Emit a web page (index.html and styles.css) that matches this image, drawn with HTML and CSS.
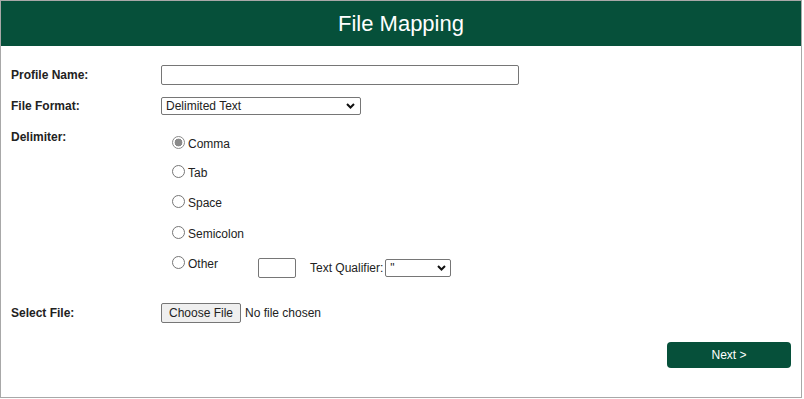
FILE: index.html
```html
<!DOCTYPE html>
<html>
<head>
<meta charset="utf-8">
<title>File Mapping</title>
<link rel="stylesheet" href="styles.css">
</head>
<body>
<div class="page">
  <header class="header"><h1 class="title">File Mapping</h1></header>
  <form class="form">
    <div class="row row-profile">
      <label class="label" for="pname">Profile Name:</label>
      <input class="text-input profile-input" id="pname" type="text">
    </div>
    <div class="row row-format">
      <label class="label" for="fmt">File Format:</label>
      <span class="select-wrap">
        <select class="select format-select" id="fmt">
          <option>Delimited Text</option>
          <option>Fixed Width</option>
        </select>
        <svg class="chev" width="9" height="6" viewBox="0 0 9 6"><path d="M1 1 L4.5 4.5 L8 1" fill="none" stroke="#111" stroke-width="2"/></svg>
      </span>
    </div>
    <div class="row row-delim">
      <div class="label label-top">Delimiter:</div>
      <div class="radio-list">
        <label class="radio-item item-comma"><input class="radio" type="radio" name="d" checked><span class="radio-text">Comma</span></label>
        <label class="radio-item item-tab"><input class="radio" type="radio" name="d"><span class="radio-text">Tab</span></label>
        <label class="radio-item item-space"><input class="radio" type="radio" name="d"><span class="radio-text">Space</span></label>
        <label class="radio-item item-semi"><input class="radio" type="radio" name="d"><span class="radio-text">Semicolon</span></label>
        <div class="radio-item other-item">
          <label class="other-label"><input class="radio" type="radio" name="d"><span class="radio-text">Other</span></label>
          <input class="text-input other-input" type="text">
          <span class="qual-text">Text Qualifier:</span>
          <span class="select-wrap qual-wrap">
            <select class="select qual-select">
              <option>"</option>
              <option>'</option>
            </select>
            <svg class="chev chev-q" width="9" height="6" viewBox="0 0 9 6"><path d="M1 1 L4.5 4.5 L8 1" fill="none" stroke="#111" stroke-width="2"/></svg>
          </span>
        </div>
      </div>
    </div>
    <div class="row row-file">
      <div class="label">Select File:</div>
      <div class="file-box">
        <button type="button" class="file-btn">Choose File</button>
        <span class="file-name">No file chosen</span>
      </div>
    </div>
    <div class="actions">
      <button type="button" class="next-btn">Next &gt;</button>
    </div>
  </form>
</div>
</body>
</html>
```

FILE: styles.css
```css
* { box-sizing: border-box; }
html, body { margin: 0; padding: 0; background: #fff; }
body { font-family: Arial, "Liberation Sans", sans-serif; color: #222; }

.page {
  width: 802px;
  height: 398px;
  border: 1px solid #a8a8a8;
  display: flex;
  flex-direction: column;
}

.header {
  height: 45px;
  background: #06503a;
  display: flex;
  align-items: center;
  justify-content: center;
}
.title {
  margin: 0;
  color: #fff;
  font-weight: normal;
  font-size: 22px;
  line-height: 26px;
}

.form {
  padding: 19px 10px 0 10px;
  display: flex;
  flex-direction: column;
}

.row {
  display: flex;
  align-items: center;
}
.label {
  width: 150px;
  flex: none;
  font-size: 12px;
  line-height: 14px;
  font-weight: bold;
  color: #222;
}

.text-input {
  border: 1px solid #767676;
  border-radius: 2px;
  background: #fff;
  padding: 0 3px;
  font: 12px Arial, "Liberation Sans", sans-serif;
  outline: none;
}
.profile-input { width: 358px; height: 20px; }

.row-format { margin-top: 12px; }

.select-wrap {
  position: relative;
  display: inline-flex;
}
.select {
  -webkit-appearance: none;
  appearance: none;
  height: 18px;
  border: 1px solid #767676;
  border-radius: 2px;
  background: #fff;
  font: 12px Arial, "Liberation Sans", sans-serif;
  color: #222;
  padding: 0 0 0 4px;
  line-height: 16px;
}
.chev {
  position: absolute;
  right: 6px;
  top: 6px;
  pointer-events: none;
}
.chev-q { right: 5px; }
.format-select { width: 200px; }

.row-delim {
  margin-top: 13px;
  align-items: flex-start;
}
.label-top { padding-top: 2px; }

.radio-list {
  display: flex;
  flex-direction: column;
  margin-left: 6px;
}
.radio-item {
  height: 30px;
  display: flex;
  align-items: center;
  font-size: 12px;
  line-height: 14px;
  color: #222;
}
.item-comma, .item-tab { height: 29px; }
.item-space, .item-semi { height: 31px; }
.radio {
  -webkit-appearance: none;
  appearance: none;
  width: 13px;
  height: 13px;
  margin: 0 3px 0 5px;
  border: 1px solid #767676;
  border-radius: 50%;
  background: #fff;
  flex: none;
}
.radio:checked {
  border-color: #8a8a8a;
  background: radial-gradient(circle, #8a8a8a 0 3.6px, #fff 4.2px);
}
.radio-text { padding-top: 2px; }

.other-item { align-items: flex-start; height: 30px; }
.other-label {
  width: 91px;
  flex: none;
  display: flex;
  align-items: center;
  height: 30px;
}
.other-label .radio { margin-top: -2px; }
.other-input {
  width: 38px;
  height: 20px;
  margin-top: 10px;
}
.qual-text {
  margin-left: 14px;
  margin-top: 13px;
}
.qual-wrap {
  margin-left: 2px;
  margin-top: 11px;
}
.qual-select { width: 66px; }

.row-file { margin-top: 25px; }
.file-box { display: flex; align-items: center; }
.file-btn {
  height: 20px;
  width: 80px;
  border: 1px solid #767676;
  border-radius: 2px;
  background: #efefef;
  font: 12px Arial, "Liberation Sans", sans-serif;
  color: #222;
  padding: 0;
}
.file-name {
  margin-left: 4px;
  font-size: 12px;
  color: #222;
}

.actions {
  display: flex;
  justify-content: flex-end;
  margin-top: 19px;
}
.next-btn {
  width: 124px;
  height: 26px;
  background: #06503a;
  color: #fff;
  border: none;
  border-radius: 4px;
  font: 12px Arial, "Liberation Sans", sans-serif;
}
```
